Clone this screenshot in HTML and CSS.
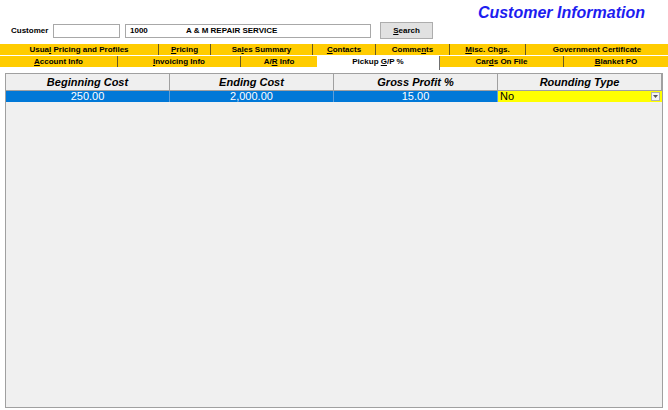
FILE: index.html
```html
<!DOCTYPE html>
<html>
<head>
<meta charset="utf-8">
<link rel="stylesheet" href="styles.css">
</head>
<body>
<div class="page">
  <div class="title">Customer Information</div>
  <div class="cust-row">
    <span class="label">Customer</span>
    <div class="field f1"></div>
    <div class="field f2"><span class="num">1000</span><span class="name">A &amp; M REPAIR SERVICE</span></div>
    <div class="btn"><u>S</u>earch</div>
  </div>
  <div class="tabs row1">
    <div class="tab">Usua<u>l</u> Pricing and Profiles</div>
    <div class="tab"><u>P</u>ricing</div>
    <div class="tab">Sa<u>l</u>es Summary</div>
    <div class="tab"><u>C</u>ontacts</div>
    <div class="tab">Comme<u>n</u>ts</div>
    <div class="tab"><u>M</u>isc. Chgs.</div>
    <div class="tab last">Government Certificate</div>
  </div>
  <div class="tabs row2">
    <div class="tab"><u>A</u>ccount Info</div>
    <div class="tab"><u>I</u>nvoicing Info</div>
    <div class="tab nosep">A/<u>R</u> Info</div>
    <div class="tab active">Pickup <u>G</u>/P %</div>
    <div class="tab">Car<u>d</u>s On File</div>
    <div class="tab last"><u>B</u>lanket PO</div>
  </div>
  <div class="grid">
    <div class="ghead">
      <div class="hcell">Beginning Cost</div>
      <div class="hcell">Ending Cost</div>
      <div class="hcell">Gross Profit %</div>
      <div class="hcell">Rounding Type</div>
    </div>
    <div class="grow">
      <div class="dcell">250.00</div>
      <div class="dcell">2,000.00</div>
      <div class="dcell">15.00</div>
      <div class="dcell combo"><span class="cval">No</span><span class="drop"><svg width="5" height="3" viewBox="0 0 5 3"><path d="M0 0h5L2.5 3z" fill="#555"/></svg></span></div>
    </div>
  </div>
</div>
</body>
</html>
```
FILE: styles.css
```css
* { box-sizing: border-box; }
html, body { margin: 0; padding: 0; background: #ffffff; }
body { font-family: "Liberation Sans", Arial, sans-serif; color: #000; }
.page { width: 668px; height: 410px; display: flex; flex-direction: column; overflow: hidden; }
.title {
  padding: 4px 23px 0 0;
  height: 22px;
  line-height: 18px;
  text-align: right;
  font-size: 16px;
  font-weight: bold;
  font-style: italic;
  color: #1d1df0;
}
.cust-row { display: flex; align-items: center; height: 17px; padding-left: 11px; }
.label { font-size: 8px; font-weight: bold; width: 42px; }
.field { height: 14px; border: 1px solid #a8a8a8; background: #fff; font-size: 8px; font-weight: bold; line-height: 12px; padding-left: 4px; display: flex; }
.f1 { width: 67px; }
.f2 { width: 246px; margin-left: 5px; }
.num { width: 56px; }
.btn {
  margin-left: 9px;
  width: 53px; height: 17px;
  background: #e1e1e1;
  border: 1px solid #adadad;
  font-size: 8px; font-weight: bold;
  line-height: 15px; text-align: center;
}
.tabs { display: grid; height: 11px; }
.row1 { margin-top: 5px; grid-template-columns: 159px 52px 102px 63px 74px 76px 142px; }
.row2 { margin-top: 1px; grid-template-columns: 118px 123px 76px 123px 124px 104px; align-items: start; }
.tab {
  background: #ffcc00;
  height: 11px;
  font-size: 8px; font-weight: bold;
  line-height: 11px;
  text-align: center;
  white-space: nowrap;
  border-right: 1px solid #6a5a20;
}
.tab.last, .tab.nosep { border-right: none; }
.tab.active { background: #fff; height: 14px; border-right: 1px solid #707070; }
.grid {
  margin: 6px 5px 2px 5px;
  flex: 1;
  border: 1px solid #a0a0a0;
  background: #f0f0f0;
}
.ghead, .grow { display: grid; grid-template-columns: repeat(4, 164px); }
.ghead { height: 17px; border-bottom: 1px solid #a0a0a0; }
.hcell {
  height: 16px;
  font-size: 11px; font-weight: bold; font-style: italic;
  line-height: 16px; text-align: center;
  border-right: 1px solid #a0a0a0;
  background: #efefef;
}
.grow { height: 11px; }
.dcell {
  background: #0078d7;
  color: #fff;
  font-size: 11px;
  line-height: 11px;
  text-align: center;
  border-right: 1px solid #5f9fd8;
}
.dcell.combo {
  background: #ffff00;
  color: #000;
  text-align: left;
  display: flex;
  border-right: none;
}
.cval { flex: 1; padding-left: 2px; }
.drop {
  width: 9px; height: 9px; margin: 1px 2px 0 0;
  background: #f4f4f4; border: 1px solid #b0b0b0;
  display: flex; align-items: center; justify-content: center;
}
```
